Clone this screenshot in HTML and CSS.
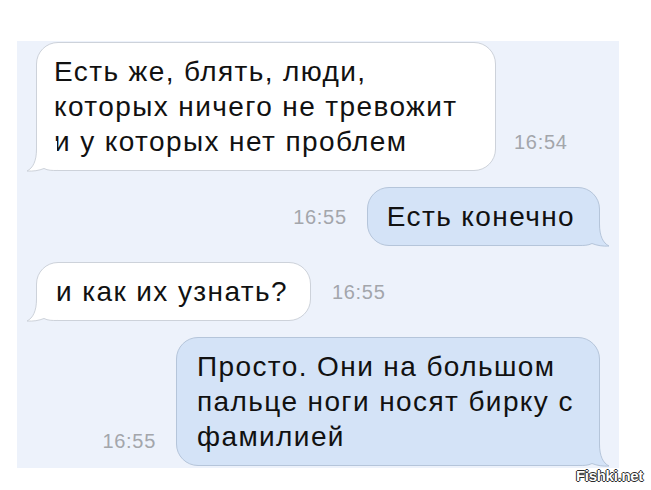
FILE: index.html
```html
<!DOCTYPE html>
<html lang="ru">
<head>
    <meta charset="UTF-8">
    <meta name="viewport" content="width=device-width, initial-scale=1.0">
    <title>Переписка</title>
    <link rel="stylesheet" href="styles.css">
</head>
<body>
    <div class="chat">
        <div class="row row-in row-tall">
            <div class="bubble in wide">
                Есть же, блять, люди, которых ничего не тревожит и у которых нет проблем
                <svg class="tail" width="30" height="30" viewBox="0 0 30 30">
                    <path class="tail-fill" d="M0,0 H20.5 V8 C20.5,20 24,27 30,30 C24,30.5 18,29.5 13,27.5 C9,29.5 5,29.5 0,29.5 Z"/>
                    <path class="tail-line" d="M20.5,0 V8 C20.5,20 24,27 30,30 C24,30.5 18,29.5 13,27.5 C9,29.5 5,29.5 0,29.5"/>
                </svg>
            </div>
            <span class="time">16:54</span>
        </div>

        <div class="row row-out">
            <span class="time">16:55</span>
            <div class="bubble out">
                Есть конечно
                <svg class="tail" width="30" height="30" viewBox="0 0 30 30">
                    <path class="tail-fill" d="M0,0 H20.5 V8 C20.5,20 24,27 30,30 C24,30.5 18,29.5 13,27.5 C9,29.5 5,29.5 0,29.5 Z"/>
                    <path class="tail-line" d="M20.5,0 V8 C20.5,20 24,27 30,30 C24,30.5 18,29.5 13,27.5 C9,29.5 5,29.5 0,29.5"/>
                </svg>
            </div>
        </div>

        <div class="row row-in">
            <div class="bubble in">
                и как их узнать?
                <svg class="tail" width="30" height="30" viewBox="0 0 30 30">
                    <path class="tail-fill" d="M0,0 H20.5 V8 C20.5,20 24,27 30,30 C24,30.5 18,29.5 13,27.5 C9,29.5 5,29.5 0,29.5 Z"/>
                    <path class="tail-line" d="M20.5,0 V8 C20.5,20 24,27 30,30 C24,30.5 18,29.5 13,27.5 C9,29.5 5,29.5 0,29.5"/>
                </svg>
            </div>
            <span class="time">16:55</span>
        </div>

        <div class="row row-out row-tall">
            <span class="time">16:55</span>
            <div class="bubble out long">
                Просто. Они на большом пальце ноги носят бирку с фамилией
                <svg class="tail" width="30" height="30" viewBox="0 0 30 30">
                    <path class="tail-fill" d="M0,0 H20.5 V8 C20.5,20 24,27 30,30 C24,30.5 18,29.5 13,27.5 C9,29.5 5,29.5 0,29.5 Z"/>
                    <path class="tail-line" d="M20.5,0 V8 C20.5,20 24,27 30,30 C24,30.5 18,29.5 13,27.5 C9,29.5 5,29.5 0,29.5"/>
                </svg>
            </div>
        </div>
    </div>

    <span class="watermark">Fishki.net</span>
</body>
</html>
```

FILE: styles.css
```css
* {
    margin: 0;
    padding: 0;
    box-sizing: border-box;
}

body {
    position: relative;
    width: 651px;
    height: 490px;
    background: #fff;
    font-family: 'Liberation Sans', Arial, sans-serif;
    overflow: hidden;
}

.chat {
    display: flex;
    flex-direction: column;
    gap: 16px;
    width: 602px;
    height: 427px;
    margin: 41px 0 0 17px;
    padding: 1px 19px 0 19px;
    background: #edf2fb;
}

.row {
    display: flex;
    align-items: center;
}

.row-out {
    justify-content: flex-end;
}

.row-tall {
    align-items: flex-end;
}

.bubble {
    position: relative;
    padding: 11px 22px 11px 19px;
    border: 1px solid #cdd2da;
    border-radius: 22px;
    color: #111;
    font-size: 28px;
    letter-spacing: 1.4px;
    line-height: 35px;
}

.bubble.in {
    background: #fff;
}

.bubble.out {
    padding-right: 24px;
    background: #d4e3f7;
    border-color: #b5c5da;
}

.bubble.wide {
    width: 460px;
    padding-left: 17px;
}

.bubble.long {
    width: 424px;
    padding-left: 20px;
}

.tail {
    position: absolute;
    bottom: -1px;
    right: -10px;
    overflow: visible;
}

.bubble.in .tail {
    right: auto;
    left: -10px;
    transform: scaleX(-1);
}

.tail-fill {
    stroke: none;
}

.tail-line {
    fill: none;
    stroke-width: 1;
}

.bubble.in .tail-fill { fill: #fff; }
.bubble.in .tail-line { stroke: #cdd2da; }
.bubble.out .tail-fill { fill: #d4e3f7; }
.bubble.out .tail-line { stroke: #b5c5da; }

.time {
    color: #a3a6ab;
    font-size: 20px;
    letter-spacing: 0.7px;
    line-height: 22px;
}

.row-in .time {
    margin-left: 21px;
}

.row-out .time {
    margin-right: 20px;
}

.row-tall.row-in .time {
    margin-left: 18px;
    margin-bottom: 18px;
}

.row-tall.row-out .time {
    margin-bottom: 14px;
}

.watermark {
    position: absolute;
    right: 8px;
    bottom: 6px;
    color: #fff;
    font-size: 15px;
    font-weight: bold;
    letter-spacing: -0.3px;
    line-height: 16px;
    text-shadow: -1px 0 #2a2a2a, 1px 0 #2a2a2a, 0 -1px #2a2a2a, 0 1px #2a2a2a;
}
```
